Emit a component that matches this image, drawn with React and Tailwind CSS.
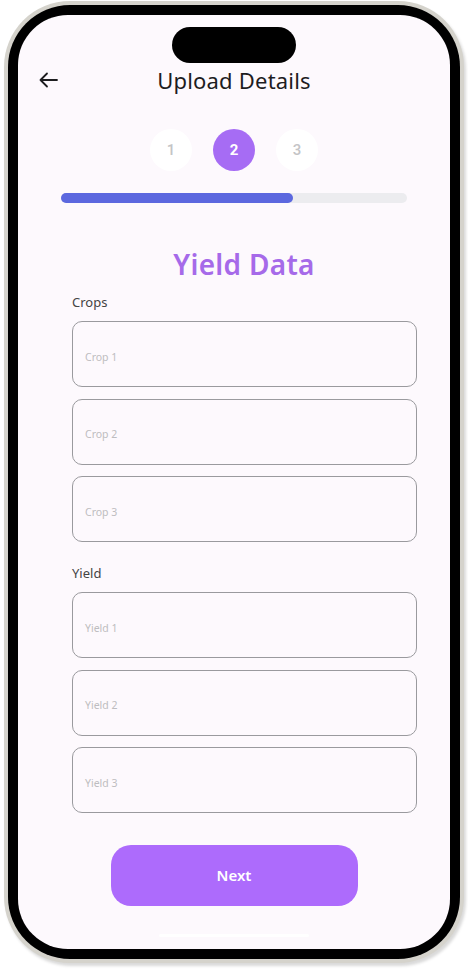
import React from "react";

// Upload details — step 2 (yield data) inside a phone frame
const CROPS = ["Crop 1", "Crop 2", "Crop 3"];
const YIELDS = ["Yield 1", "Yield 2", "Yield 3"];

const Field = ({ placeholder }) => (
    <div className="h-[66px] w-full rounded-[10px] border border-[#9a9a9e] flex items-center px-[12px]">
        <span className="text-[10.5px] text-[#bdbdc0] pt-[7px]">{placeholder}</span>
    </div>
);

const Step = ({ n, active }) => (
    <div
        className={`w-[42px] h-[42px] rounded-full flex items-center justify-center text-[15px] font-['Roboto',sans-serif] ${
            active ? "bg-[#a66cf4] text-white font-bold" : "bg-white text-[#c4c4c6] font-medium"
        }`}
    >
        {n}
    </div>
);

const App = () => {
    return (
        <div className="w-[468px] h-[970px] bg-white font-['Noto_Sans',sans-serif]">
            {/* outer frame */}
            <div className="ml-[4px] mt-[1px] w-[460px] h-[962px] rounded-[66px] bg-[#d5d3cc] p-[4px] shadow-[2px_3px_3px_rgba(0,0,0,0.15)]">
                <div className="w-full h-full rounded-[62px] bg-black p-[10px]">
                    <div className="w-full h-full rounded-[50px] bg-[#fdf9fd] flex flex-col overflow-hidden">
                        {/* dynamic island */}
                        <div className="mt-[12px] mx-auto w-[124px] h-[36px] rounded-full bg-black" />

                        {/* header */}
                        <div className="mt-[3px] h-[28px] flex items-center relative">
                            <svg className="absolute left-[21px] top-[6px]" width="19" height="16" viewBox="0 0 19 16" fill="none" stroke="#1d1d1f" strokeWidth="1.8" strokeLinecap="round" strokeLinejoin="round">
                                <path d="M18 8H1.5M8 1.5L1.5 8L8 14.5" />
                            </svg>
                            <h1 className="w-full text-center text-[22px] font-normal text-[#1d1d1f] tracking-[0.2px]">Upload Details</h1>
                        </div>

                        {/* steps */}
                        <div className="mt-[35px] flex justify-center gap-[21px]">
                            <Step n="1" />
                            <Step n="2" active />
                            <Step n="3" />
                        </div>

                        {/* progress */}
                        <div className="mt-[22px] mx-[43px] h-[10px] rounded-full bg-[#ececef]">
                            <div className="h-full w-[67%] rounded-full bg-[#5c68df]" />
                        </div>

                        {/* form */}
                        <div className="pl-[53px] pr-[33px] flex flex-col">
                            <h2 className="mt-[44px] text-center text-[28px] leading-[34px] font-semibold text-[#a66ae9] tracking-[0.3px]">Yield Data</h2>

                            <p className="mt-[13px] pl-[1px] text-[13px] leading-[16px] text-[#444]">Crops</p>
                            <div className="mt-[11px] pl-[1px] flex flex-col gap-[11.5px]">
                                {CROPS.map((c) => (
                                    <Field key={c} placeholder={c} />
                                ))}
                            </div>

                            <p className="mt-[23px] pl-[1px] text-[13px] leading-[16px] text-[#444]">Yield</p>
                            <div className="mt-[11px] pl-[1px] flex flex-col gap-[11.5px]">
                                {YIELDS.map((y) => (
                                    <Field key={y} placeholder={y} />
                                ))}
                            </div>
                        </div>

                        {/* next */}
                        <div className="mt-[32px] flex justify-center">
                            <button className="w-[247px] h-[61px] rounded-[20px] bg-[#ad6bfc] text-white text-[15px] font-semibold">
                                Next
                            </button>
                        </div>

                        <div className="mt-[28px] mx-auto w-[150px] h-[3px] rounded-full bg-white" />
                    </div>
                </div>
            </div>
        </div>
    );
};

export default App;
